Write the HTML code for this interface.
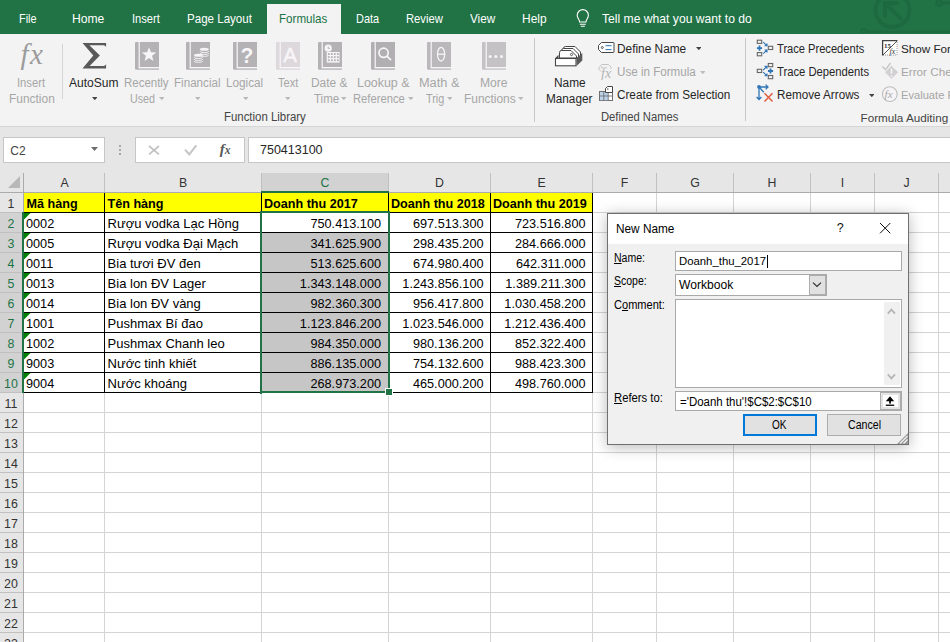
<!DOCTYPE html>
<html><head><meta charset="utf-8"><style>
html,body{margin:0;padding:0;width:950px;height:642px;overflow:hidden;background:#fff}
body{position:relative;font-family:"Liberation Sans", sans-serif}
.t{position:absolute;white-space:nowrap;line-height:1}
.r{position:absolute}
u{text-decoration:underline;text-underline-offset:1px}
</style></head><body>
<div class="r" style="left:0px;top:0px;width:950px;height:34px;background:#217346"></div>
<svg class="r" style="left:820px;top:0" width="130" height="33" viewBox="820 0 130 33">
<g fill="none" stroke="#1e6a40" stroke-width="4">
<circle cx="892.5" cy="10" r="17"/>
<circle cx="939" cy="3" r="2.6" stroke-width="2.6"/>
<path d="M941.5 3 H950" stroke-width="3"/>
<circle cx="863.5" cy="31.5" r="2.4" stroke-width="2.2"/>
<path d="M866 31.8 H950" stroke-width="2.6"/>
</g>
<path d="M883 1 H899 V5 H889.8 L903 18.2 L900.2 21 L887 7.8 V17.5 H883 Z" fill="#1e6a40"/>
</svg>
<div class="t" style="left:18.60px;top:13.47px;font-size:12.2px;color:#ffffff;font-weight:normal;transform:scaleX(0.8904);transform-origin:0 0;">File</div>
<div class="t" style="left:71.60px;top:13.47px;font-size:12.2px;color:#ffffff;font-weight:normal;transform:scaleX(0.9954);transform-origin:0 0;">Home</div>
<div class="t" style="left:131.60px;top:13.47px;font-size:12.2px;color:#ffffff;font-weight:normal;transform:scaleX(0.9111);transform-origin:0 0;">Insert</div>
<div class="t" style="left:187.00px;top:13.47px;font-size:12.2px;color:#ffffff;font-weight:normal;transform:scaleX(0.9487);transform-origin:0 0;">Page Layout</div>
<div class="t" style="left:355.80px;top:13.47px;font-size:12.2px;color:#ffffff;font-weight:normal;transform:scaleX(0.9000);transform-origin:0 0;">Data</div>
<div class="t" style="left:406.30px;top:13.47px;font-size:12.2px;color:#ffffff;font-weight:normal;transform:scaleX(0.9216);transform-origin:0 0;">Review</div>
<div class="t" style="left:469.50px;top:13.47px;font-size:12.2px;color:#ffffff;font-weight:normal;transform:scaleX(0.9636);transform-origin:0 0;">View</div>
<div class="t" style="left:522.40px;top:13.47px;font-size:12.2px;color:#ffffff;font-weight:normal;transform:scaleX(0.9803);transform-origin:0 0;">Help</div>
<div class="t" style="left:602.20px;top:13.47px;font-size:12.2px;color:#ffffff;font-weight:normal;transform:scaleX(0.9957);transform-origin:0 0;">Tell me what you want to do</div>
<div class="r" style="left:267px;top:4px;width:74px;height:30px;background:#f3f3f3"></div>
<div class="t" style="left:279.40px;top:13.47px;font-size:12.2px;color:#217346;font-weight:normal;transform:scaleX(0.9518);transform-origin:0 0;">Formulas</div>
<svg class="r" style="left:572px;top:8px" width="22" height="22" viewBox="572 8 22 22">
<g fill="none" stroke="#ffffff" stroke-width="1.1">
<path d="M579.6 22 C579.6 19.6 577.2 18.2 577.2 15.2 A5.6 5.6 0 0 1 588.4 15.2 C588.4 18.2 586 19.6 586 22 Z"/>
<path d="M579.8 24.2 H585.8 M580.8 26.3 H584.8"/>
</g></svg>
<div class="r" style="left:0px;top:34px;width:950px;height:92px;background:#f3f3f3"></div>
<div class="r" style="left:0px;top:126px;width:950px;height:1px;background:#d6d6d6"></div>
<div class="r" style="left:0px;top:127px;width:950px;height:46px;background:#e6e6e6"></div>
<div class="t" style="left:20.50px;top:39.95px;font-size:29px;color:#9c9c9c;font-weight:normal;font-family:'Liberation Serif', serif;letter-spacing:1.5px"><i>fx</i></div>
<div class="t" style="left:17.40px;top:76.84px;font-size:12px;color:#a6a6a6;font-weight:normal;transform:scaleX(0.9330);transform-origin:0 0;">Insert</div>
<div class="t" style="left:8.60px;top:93.34px;font-size:12px;color:#a6a6a6;font-weight:normal;transform:scaleX(0.9952);transform-origin:0 0;">Function</div>
<div class="r" style="left:62px;top:44px;width:1px;height:55px;background:#d4d4d4"></div>
<svg class="r" style="left:80px;top:40px" width="30" height="32" viewBox="80 40 30 32">
<path d="M82.5 43 H106.1 V47.3 C105.6 45.9 104.6 45.3 102.5 45.3 H89.4 L99.9 55.5 L89.6 66.1 H102.5 C104.6 66.1 105.6 65.5 106.1 64.1 V68.4 H82.5 L93.3 55.5 Z" fill="#595959"/>
</svg>
<div class="t" style="left:69.20px;top:76.84px;font-size:12px;color:#262626;font-weight:normal;transform:scaleX(1.0029);transform-origin:0 0;">AutoSum</div>
<svg class="r" style="left:91.70px;top:97.00px" width="5.6" height="3.2" viewBox="0 0 5.6 3.2"><path d="M0 0 H5.6 L2.8 3.2 Z" fill="#444"/></svg>
<svg class="r" style="left:135.2px;top:42px" width="24" height="28" viewBox="0 0 24 28">
<path d="M1.2 0 H24 V27.8 H1.2 A1.2 1.2 0 0 1 0 26.6 V1.2 A1.2 1.2 0 0 1 1.2 0 Z" fill="#b4b2b5"/>
<rect x="3.6" y="0" width="1.2" height="25.2" fill="#f8f5f8"/>
<path d="M3.6 25 V26.4 H24 V25 Z" fill="#f8f5f8"/>
<path d="M14.00 5.20 L15.88 10.21 L21.23 10.45 L17.04 13.79 L18.47 18.95 L14.00 16.00 L9.53 18.95 L10.96 13.79 L6.77 10.45 L12.12 10.21 Z" fill="#f8f5f8"/>
</svg>
<svg class="r" style="left:186.2px;top:42px" width="24" height="28" viewBox="0 0 24 28">
<path d="M1.2 0 H24 V27.8 H1.2 A1.2 1.2 0 0 1 0 26.6 V1.2 A1.2 1.2 0 0 1 1.2 0 Z" fill="#b4b2b5"/>
<rect x="3.6" y="0" width="1.2" height="25.2" fill="#f8f5f8"/>
<path d="M3.6 25 V26.4 H24 V25 Z" fill="#f8f5f8"/>
<ellipse cx="18.3" cy="7.2" rx="4.4" ry="1.5" fill="#f8f5f8"/><path d="M13.9 9.1 A4.4 1.5 0 0 0 22.700000000000003 9.1" fill="none" stroke="#f8f5f8" stroke-width="0.9"/><path d="M13.9 11.0 A4.4 1.5 0 0 0 22.700000000000003 11.0" fill="none" stroke="#f8f5f8" stroke-width="0.9"/><path d="M13.9 12.899999999999999 A4.4 1.5 0 0 0 22.700000000000003 12.899999999999999" fill="none" stroke="#f8f5f8" stroke-width="0.9"/><ellipse cx="12.4" cy="13.2" rx="4.4" ry="1.5" fill="#f8f5f8"/><path d="M8.0 15.1 A4.4 1.5 0 0 0 16.8 15.1" fill="none" stroke="#f8f5f8" stroke-width="0.9"/><path d="M8.0 17.0 A4.4 1.5 0 0 0 16.8 17.0" fill="none" stroke="#f8f5f8" stroke-width="0.9"/><path d="M8.0 18.9 A4.4 1.5 0 0 0 16.8 18.9" fill="none" stroke="#f8f5f8" stroke-width="0.9"/>
</svg>
<svg class="r" style="left:233px;top:42px" width="24" height="28" viewBox="0 0 24 28">
<path d="M1.2 0 H24 V27.8 H1.2 A1.2 1.2 0 0 1 0 26.6 V1.2 A1.2 1.2 0 0 1 1.2 0 Z" fill="#b4b2b5"/>
<rect x="3.6" y="0" width="1.2" height="25.2" fill="#f8f5f8"/>
<path d="M3.6 25 V26.4 H24 V25 Z" fill="#f8f5f8"/>
<text x="14" y="20.6" font-family="Liberation Sans" font-weight="bold" font-size="21" fill="#f8f5f8" text-anchor="middle" transform="translate(14 20.6) scale(1 1.08) translate(-14 -20.6)">?</text>
</svg>
<svg class="r" style="left:276px;top:42px" width="24" height="28" viewBox="0 0 24 28">
<path d="M1.2 0 H24 V27.8 H1.2 A1.2 1.2 0 0 1 0 26.6 V1.2 A1.2 1.2 0 0 1 1.2 0 Z" fill="#dcd8dc"/>
<rect x="3.6" y="0" width="1.2" height="25.2" fill="#f8f5f8"/>
<path d="M3.6 25 V26.4 H24 V25 Z" fill="#f8f5f8"/>
<text x="14.2" y="20" font-family="Liberation Sans" font-size="20.5" fill="#f8f5f8" stroke="#f8f5f8" stroke-width="0.45" text-anchor="middle">A</text>
</svg>
<svg class="r" style="left:318.3px;top:42px" width="24" height="28" viewBox="0 0 24 28">
<path d="M1.2 0 H24 V27.8 H1.2 A1.2 1.2 0 0 1 0 26.6 V1.2 A1.2 1.2 0 0 1 1.2 0 Z" fill="#b4b2b5"/>
<rect x="3.6" y="0" width="1.2" height="25.2" fill="#f8f5f8"/>
<path d="M3.6 25 V26.4 H24 V25 Z" fill="#f8f5f8"/>
<circle cx="10.2" cy="6.2" r="3.6" fill="#f8f5f8"/><path d="M10.2 4.3 V6.4 H12" stroke="#b4b2b5" stroke-width="0.9" fill="none"/><rect x="8.7" y="10" width="12.8" height="10.6" fill="#f8f5f8"/><rect x="9.9" y="11.1" width="1.8" height="1.9" fill="#b4b2b5"/><rect x="12.9" y="11.1" width="1.8" height="1.9" fill="#b4b2b5"/><rect x="15.9" y="11.1" width="1.8" height="1.9" fill="#b4b2b5"/><rect x="18.9" y="11.1" width="1.8" height="1.9" fill="#b4b2b5"/><rect x="9.9" y="14.2" width="1.8" height="1.9" fill="#b4b2b5"/><rect x="12.9" y="14.2" width="1.8" height="1.9" fill="#b4b2b5"/><rect x="15.9" y="14.2" width="1.8" height="1.9" fill="#b4b2b5"/><rect x="18.9" y="14.2" width="1.8" height="1.9" fill="#b4b2b5"/><rect x="9.9" y="17.3" width="1.8" height="1.9" fill="#b4b2b5"/><rect x="12.9" y="17.3" width="1.8" height="1.9" fill="#b4b2b5"/><rect x="15.9" y="17.3" width="1.8" height="1.9" fill="#b4b2b5"/><rect x="18.9" y="17.3" width="1.8" height="1.9" fill="#b4b2b5"/>
</svg>
<svg class="r" style="left:371px;top:42px" width="24" height="28" viewBox="0 0 24 28">
<path d="M1.2 0 H24 V27.8 H1.2 A1.2 1.2 0 0 1 0 26.6 V1.2 A1.2 1.2 0 0 1 1.2 0 Z" fill="#b1afb2"/>
<rect x="3.6" y="0" width="1.2" height="25.2" fill="#f8f5f8"/>
<path d="M3.6 25 V26.4 H24 V25 Z" fill="#f8f5f8"/>
<g fill="none" stroke="#f8f5f8" stroke-width="1.7"><circle cx="12.6" cy="10.8" r="4.6"/><path d="M15.9 14.1 L20 18.2"/></g>
</svg>
<svg class="r" style="left:427px;top:42px" width="24" height="28" viewBox="0 0 24 28">
<path d="M1.2 0 H24 V27.8 H1.2 A1.2 1.2 0 0 1 0 26.6 V1.2 A1.2 1.2 0 0 1 1.2 0 Z" fill="#bab8bb"/>
<rect x="3.6" y="0" width="1.2" height="25.2" fill="#f8f5f8"/>
<path d="M3.6 25 V26.4 H24 V25 Z" fill="#f8f5f8"/>
<g fill="none" stroke="#f8f5f8" stroke-width="1.3"><ellipse cx="14.1" cy="12.2" rx="3.6" ry="6.8"/><path d="M10.5 12.2 H17.7"/></g>
</svg>
<svg class="r" style="left:482.2px;top:42px" width="24" height="28" viewBox="0 0 24 28">
<path d="M1.2 0 H24 V27.8 H1.2 A1.2 1.2 0 0 1 0 26.6 V1.2 A1.2 1.2 0 0 1 1.2 0 Z" fill="#c4c2c5"/>
<rect x="3.6" y="0" width="1.2" height="25.2" fill="#f8f5f8"/>
<path d="M3.6 25 V26.4 H24 V25 Z" fill="#f8f5f8"/>
<g fill="#f8f5f8"><circle cx="8.1" cy="14.6" r="1.5"/><circle cx="13.9" cy="14.6" r="1.5"/><circle cx="19.5" cy="14.6" r="1.5"/></g>
</svg>
<div class="t" style="left:124.20px;top:76.84px;font-size:12px;color:#a6a6a6;font-weight:normal;transform:scaleX(0.9552);transform-origin:0 0;">Recently</div>
<div class="t" style="left:130.40px;top:93.34px;font-size:12px;color:#a6a6a6;font-weight:normal;transform:scaleX(0.8926);transform-origin:0 0;">Used</div>
<svg class="r" style="left:158.90px;top:97.00px" width="5.6" height="3.2" viewBox="0 0 5.6 3.2"><path d="M0 0 H5.6 L2.8 3.2 Z" fill="#b9b9b9"/></svg>
<div class="t" style="left:174.20px;top:76.84px;font-size:12px;color:#a6a6a6;font-weight:normal;transform:scaleX(0.9683);transform-origin:0 0;">Financial</div>
<svg class="r" style="left:194.60px;top:97.00px" width="5.6" height="3.2" viewBox="0 0 5.6 3.2"><path d="M0 0 H5.6 L2.8 3.2 Z" fill="#b9b9b9"/></svg>
<div class="t" style="left:226.40px;top:76.84px;font-size:12px;color:#a6a6a6;font-weight:normal;transform:scaleX(0.9782);transform-origin:0 0;">Logical</div>
<svg class="r" style="left:242.60px;top:97.00px" width="5.6" height="3.2" viewBox="0 0 5.6 3.2"><path d="M0 0 H5.6 L2.8 3.2 Z" fill="#b9b9b9"/></svg>
<div class="t" style="left:277.60px;top:76.84px;font-size:12px;color:#a6a6a6;font-weight:normal;transform:scaleX(0.9178);transform-origin:0 0;">Text</div>
<svg class="r" style="left:284.60px;top:97.00px" width="5.6" height="3.2" viewBox="0 0 5.6 3.2"><path d="M0 0 H5.6 L2.8 3.2 Z" fill="#b9b9b9"/></svg>
<div class="t" style="left:311.30px;top:76.84px;font-size:12px;color:#a6a6a6;font-weight:normal;transform:scaleX(0.9950);transform-origin:0 0;">Date &amp;</div>
<div class="t" style="left:313.80px;top:93.34px;font-size:12px;color:#a6a6a6;font-weight:normal;transform:scaleX(0.9611);transform-origin:0 0;">Time</div>
<svg class="r" style="left:341.20px;top:97.00px" width="5.6" height="3.2" viewBox="0 0 5.6 3.2"><path d="M0 0 H5.6 L2.8 3.2 Z" fill="#b9b9b9"/></svg>
<div class="t" style="left:357.30px;top:76.84px;font-size:12px;color:#a6a6a6;font-weight:normal;transform:scaleX(1.0353);transform-origin:0 0;">Lookup &amp;</div>
<div class="t" style="left:353.40px;top:93.34px;font-size:12px;color:#a6a6a6;font-weight:normal;transform:scaleX(0.9356);transform-origin:0 0;">Reference</div>
<svg class="r" style="left:407.70px;top:97.00px" width="5.6" height="3.2" viewBox="0 0 5.6 3.2"><path d="M0 0 H5.6 L2.8 3.2 Z" fill="#b9b9b9"/></svg>
<div class="t" style="left:418.50px;top:76.84px;font-size:12px;color:#a6a6a6;font-weight:normal;transform:scaleX(1.0627);transform-origin:0 0;">Math &amp;</div>
<div class="t" style="left:425.50px;top:93.34px;font-size:12px;color:#a6a6a6;font-weight:normal;transform:scaleX(0.9001);transform-origin:0 0;">Trig</div>
<svg class="r" style="left:446.80px;top:97.00px" width="5.6" height="3.2" viewBox="0 0 5.6 3.2"><path d="M0 0 H5.6 L2.8 3.2 Z" fill="#b9b9b9"/></svg>
<div class="t" style="left:480.40px;top:76.84px;font-size:12px;color:#a6a6a6;font-weight:normal;transform:scaleX(1.0097);transform-origin:0 0;">More</div>
<div class="t" style="left:464.30px;top:93.34px;font-size:12px;color:#a6a6a6;font-weight:normal;transform:scaleX(0.9938);transform-origin:0 0;">Functions</div>
<svg class="r" style="left:518.40px;top:97.00px" width="5.6" height="3.2" viewBox="0 0 5.6 3.2"><path d="M0 0 H5.6 L2.8 3.2 Z" fill="#b9b9b9"/></svg>
<div class="t" style="left:224.40px;top:111.24px;font-size:12px;color:#444444;font-weight:normal;transform:scaleX(0.9507);transform-origin:0 0;">Function Library</div>
<div class="r" style="left:534px;top:38px;width:1px;height:84px;background:#c8c8c8"></div>
<svg class="r" style="left:550px;top:42px" width="36" height="28" viewBox="550 42 36 28">
<g fill="#fff" stroke="#474747" stroke-width="1">
<path d="M563.5 58 V48.5 Q563.5 46.5 565.5 46.5 H575 L580.5 52 V58 Z"/>
<path d="M561.5 58 V50.5 Q561.5 48.5 563.5 48.5 H573 L578.5 54 V58 Z"/>
<path d="M559.5 58 V52.5 Q559.5 50.5 561.5 50.5 H571 L576.5 56 V58 Z"/>
</g>
<circle cx="571.5" cy="54.5" r="1.1" fill="none" stroke="#474747" stroke-width="0.9"/>
<rect x="555.5" y="58.5" width="20.5" height="7.3" fill="#fff" stroke="#474747" stroke-width="1.1"/>
<path d="M576.5 58 L582.3 53 V60.6 L576.5 66 Z" fill="#5a5a5a"/>
<path d="M555.2 58.2 L558.5 54.8 V58.2 Z" fill="#474747"/>
</svg>
<div class="t" style="left:553.80px;top:76.84px;font-size:12px;color:#262626;font-weight:normal;transform:scaleX(0.9870);transform-origin:0 0;">Name</div>
<div class="t" style="left:545.60px;top:93.34px;font-size:12px;color:#262626;font-weight:normal;transform:scaleX(0.9796);transform-origin:0 0;">Manager</div>
<svg class="r" style="left:596px;top:40px" width="20" height="15" viewBox="596 40 20 15">
<path d="M601.5 42.5 H613.5 Q614 42.5 614 43 V52 Q614 52.5 613.5 52.5 H601.5 L598.5 49.5 V45.5 Z" fill="#fff" stroke="#474747" stroke-width="1"/>
<circle cx="602.3" cy="47.5" r="1" fill="none" stroke="#474747" stroke-width="0.9"/>
<path d="M605.5 45.7 H611.5 M605.5 49.6 H611.5" stroke="#2e75b6" stroke-width="1"/>
</svg>
<div class="t" style="left:617.20px;top:42.84px;font-size:12px;color:#262626;font-weight:normal;transform:scaleX(0.9881);transform-origin:0 0;">Define Name</div>
<svg class="r" style="left:695.70px;top:47.00px" width="5.6" height="3.2" viewBox="0 0 5.6 3.2"><path d="M0 0 H5.6 L2.8 3.2 Z" fill="#444"/></svg>
<svg class="r" style="left:596px;top:62px" width="20" height="18" viewBox="596 62 20 18">
<path d="M601.5 64.5 H608.5 L611 67 V69 M599 67.5 V69.5 L601 71.5 M599 67.5 L601.5 64.5" fill="none" stroke="#c4c4c4" stroke-width="1"/>
<circle cx="602" cy="67.5" r="0.9" fill="#c4c4c4"/>
<text x="601" y="77.5" font-family="Liberation Serif" font-style="italic" font-size="14" fill="#b4b4b4">fx</text>
</svg>
<div class="t" style="left:617.20px;top:65.84px;font-size:12px;color:#a6a6a6;font-weight:normal;transform:scaleX(0.9684);transform-origin:0 0;">Use in Formula</div>
<svg class="r" style="left:699.70px;top:70.50px" width="5.6" height="3.2" viewBox="0 0 5.6 3.2"><path d="M0 0 H5.6 L2.8 3.2 Z" fill="#bdbdbd"/></svg>
<svg class="r" style="left:597px;top:85px" width="18" height="17" viewBox="597 85 18 17">
<rect x="599.5" y="91.5" width="13" height="9" fill="#fff" stroke="#6f6f6f" stroke-width="1"/>
<rect x="600" y="92" width="8.2" height="8.2" fill="#bcd3ec"/>
<path d="M599.5 96 H612.5 M603.8 91.5 V100.5 M608.2 91.5 V100.5" stroke="#6f6f6f" stroke-width="0.9"/>
<path d="M605.5 88.5 L607.5 86.5 H612.5 V92.5 H605.5 Z" fill="#fff" stroke="#474747" stroke-width="1"/>
<circle cx="607.8" cy="89" r="0.7" fill="#474747"/>
</svg>
<div class="t" style="left:617.20px;top:88.84px;font-size:12px;color:#262626;font-weight:normal;transform:scaleX(0.9771);transform-origin:0 0;">Create from Selection</div>
<div class="t" style="left:601.30px;top:111.24px;font-size:12px;color:#444444;font-weight:normal;transform:scaleX(0.9359);transform-origin:0 0;">Defined Names</div>
<div class="r" style="left:745px;top:38px;width:1px;height:83px;background:#c8c8c8"></div>
<svg class="r" style="left:752px;top:36px" width="24" height="70" viewBox="752 36 24 70">
<g fill="none" stroke="#666" stroke-width="1.1">
<rect x="757.3" y="40.2" width="4.4" height="3.2"/><rect x="757.3" y="52.6" width="4.4" height="3.2"/><rect x="768.3" y="46.3" width="4.4" height="3.2"/>
<rect x="757.3" y="69.3" width="4.4" height="3.2"/><rect x="768.3" y="63.5" width="4.4" height="3.2"/><rect x="768.3" y="75.5" width="4.4" height="3.2"/>
</g>
<g stroke="#2e75b6" stroke-width="1.8" fill="none">
<path d="M759.5 45.6 V50.8 M756.9 48.2 H762.1"/>
<path d="M770.5 68.4 V73.6 M767.9 71 H773.1"/>
</g>
<g stroke="#2e75b6" stroke-width="1.1" fill="none">
<path d="M763.2 42.2 L766.8 45.6 M764.6 45.8 H767 V43.4"/>
<path d="M763.2 53.6 L766.8 50.2 M764.6 50 H767 V52.4"/>
<path d="M763.2 70 L766.8 66.6 M764.6 66.4 H767 V68.8"/>
<path d="M763.2 72.2 L766.8 75.6 M764.6 75.8 H767 V73.4"/>
</g>
<g stroke="#2e75b6" stroke-width="1.3" fill="none">
<path d="M759 87 V99.5 M756.6 97 L759 99.5 L761.4 97"/>
<path d="M759 87 H768 M765.6 84.6 L768 87 L765.6 89.4"/>
<path d="M759 87 L763.8 92.2"/>
</g>
<circle cx="759" cy="86.8" r="1.9" fill="#2e75b6"/>
<path d="M764.5 93.2 L772.5 101.5 M772.5 93.2 L764.5 101.5" stroke="#e05a3a" stroke-width="1.4"/>
</svg>
<div class="t" style="left:776.50px;top:42.84px;font-size:12px;color:#262626;font-weight:normal;transform:scaleX(0.9260);transform-origin:0 0;">Trace Precedents</div>
<div class="t" style="left:776.50px;top:66.14px;font-size:12px;color:#262626;font-weight:normal;transform:scaleX(0.9371);transform-origin:0 0;">Trace Dependents</div>
<div class="t" style="left:776.50px;top:88.84px;font-size:12px;color:#262626;font-weight:normal;transform:scaleX(0.9729);transform-origin:0 0;">Remove Arrows</div>
<svg class="r" style="left:868.70px;top:93.50px" width="5.6" height="3.2" viewBox="0 0 5.6 3.2"><path d="M0 0 H5.6 L2.8 3.2 Z" fill="#444"/></svg>
<svg class="r" style="left:880px;top:38px" width="20" height="20" viewBox="880 38 20 20">
<rect x="882.5" y="40.5" width="14.5" height="14.5" fill="#fff" stroke="#9a9a9a" stroke-width="1" stroke-dasharray="1 1"/>
<path d="M882.6 55.4 V40.6 H897.4" fill="none" stroke="#444" stroke-width="1.3"/>
<path d="M883 55 L897 41" stroke="#444" stroke-width="0.9"/>
<text x="884" y="47.5" font-family="Liberation Serif" font-size="7" font-weight="bold" fill="#333">15</text>
<text x="889.5" y="54" font-family="Liberation Serif" font-style="italic" font-size="8" fill="#333">fx</text>
</svg>
<div class="t" style="left:901.00px;top:43.10px;font-size:11.7px;color:#262626;font-weight:normal;font-family:'Liberation Sans', sans-serif;">Show Formulas</div>
<svg class="r" style="left:880px;top:61px" width="20" height="20" viewBox="880 61 20 20">
<path d="M882.3 66.5 L885.5 69.6 L890.5 63" fill="none" stroke="#c8c8c8" stroke-width="1.5"/>
<path d="M891.5 65.8 L898 72.3 L891.5 78.8 L885 72.3 Z" fill="#d2d0d2"/>
<path d="M891.5 68.5 V73.8 M891.5 75.2 V76.8" stroke="#f3f3f3" stroke-width="1.6"/>
</svg>
<div class="t" style="left:901.00px;top:66.40px;font-size:11.7px;color:#a6a6a6;font-weight:normal;font-family:'Liberation Sans', sans-serif;">Error Checking</div>
<svg class="r" style="left:880px;top:84px" width="20" height="20" viewBox="880 84 20 20">
<circle cx="889.8" cy="94.1" r="7.4" fill="#f6f4f6" stroke="#bdbdbd" stroke-width="1.1"/>
<text x="884.6" y="98.2" font-family="Liberation Serif" font-style="italic" font-size="11" fill="#a8a8a8">fx</text>
</svg>
<div class="t" style="left:901.00px;top:89.56px;font-size:11.15px;color:#a6a6a6;font-weight:normal;font-family:'Liberation Sans', sans-serif;">Evaluate Formula</div>
<div class="t" style="left:860.50px;top:111.70px;font-size:11.7px;color:#444444;font-weight:normal;font-family:'Liberation Sans', sans-serif;">Formula Auditing</div>
<div class="r" style="left:3px;top:137px;width:102px;height:26px;background:#fff;border:1px solid #c6c6c6;box-sizing:border-box"></div>
<div class="t" style="left:10.30px;top:144.84px;font-size:12px;color:#444444;font-weight:normal;font-family:'Liberation Sans', sans-serif;">C2</div>
<svg class="r" style="left:91.00px;top:147.00px" width="7" height="4" viewBox="0 0 7 4"><path d="M0 0 H7 L3.5 4 Z" fill="#6d6d6d"/></svg>
<div class="r" style="left:119px;top:145px;width:2px;height:2px;background:#a8a8a8"></div>
<div class="r" style="left:119px;top:149px;width:2px;height:2px;background:#a8a8a8"></div>
<div class="r" style="left:119px;top:153px;width:2px;height:2px;background:#a8a8a8"></div>
<div class="r" style="left:135px;top:137px;width:110px;height:26px;background:#fff;border:1px solid #c6c6c6;box-sizing:border-box"></div>
<svg class="r" style="left:145px;top:142px" width="18" height="16" viewBox="145 142 18 16"><path d="M149 146 L159 154.3 M159 146 L149 154.3" stroke="#c2c2c2" stroke-width="1.7"/></svg>
<svg class="r" style="left:182px;top:142px" width="18" height="16" viewBox="182 142 18 16"><path d="M185 149.6 L189.3 154.3 L196.3 145.4" fill="none" stroke="#c6c6c6" stroke-width="2.1"/></svg>
<div class="t" style="left:219.80px;top:141.70px;font-size:15px;color:#595959;font-weight:bold;font-family:'Liberation Serif', serif;"><i>f</i><i style="font-size:11.5px">x</i></div>
<div class="r" style="left:248px;top:137px;width:702px;height:26px;background:#fff;border:1px solid #c6c6c6;border-right:none;box-sizing:border-box"></div>
<div class="t" style="left:260.00px;top:144.42px;font-size:12.5px;color:#262626;font-weight:normal;font-family:'Liberation Sans', sans-serif;">750413100</div>
<div class="r" style="left:0px;top:173px;width:950px;height:469px;background:#fff"></div>
<div class="r" style="left:0px;top:173px;width:950px;height:19px;background:#e6e6e6"></div>
<div class="r" style="left:261px;top:173px;width:127px;height:19px;background:#d2d2d2"></div>
<div class="r" style="left:0px;top:192px;width:23px;height:450px;background:#e6e6e6"></div>
<div class="r" style="left:0px;top:212px;width:23px;height:180px;background:#d2d2d2"></div>
<div class="r" style="left:24px;top:212px;width:926px;height:1px;background:#d4d4d4"></div><div class="r" style="left:0;top:212px;width:23px;height:1px;background:#c0c0c0"></div><div class="r" style="left:24px;top:232px;width:926px;height:1px;background:#d4d4d4"></div><div class="r" style="left:0;top:232px;width:23px;height:1px;background:#c0c0c0"></div><div class="r" style="left:24px;top:252px;width:926px;height:1px;background:#d4d4d4"></div><div class="r" style="left:0;top:252px;width:23px;height:1px;background:#c0c0c0"></div><div class="r" style="left:24px;top:272px;width:926px;height:1px;background:#d4d4d4"></div><div class="r" style="left:0;top:272px;width:23px;height:1px;background:#c0c0c0"></div><div class="r" style="left:24px;top:292px;width:926px;height:1px;background:#d4d4d4"></div><div class="r" style="left:0;top:292px;width:23px;height:1px;background:#c0c0c0"></div><div class="r" style="left:24px;top:312px;width:926px;height:1px;background:#d4d4d4"></div><div class="r" style="left:0;top:312px;width:23px;height:1px;background:#c0c0c0"></div><div class="r" style="left:24px;top:332px;width:926px;height:1px;background:#d4d4d4"></div><div class="r" style="left:0;top:332px;width:23px;height:1px;background:#c0c0c0"></div><div class="r" style="left:24px;top:352px;width:926px;height:1px;background:#d4d4d4"></div><div class="r" style="left:0;top:352px;width:23px;height:1px;background:#c0c0c0"></div><div class="r" style="left:24px;top:372px;width:926px;height:1px;background:#d4d4d4"></div><div class="r" style="left:0;top:372px;width:23px;height:1px;background:#c0c0c0"></div><div class="r" style="left:24px;top:392px;width:926px;height:1px;background:#d4d4d4"></div><div class="r" style="left:0;top:392px;width:23px;height:1px;background:#c0c0c0"></div><div class="r" style="left:24px;top:412px;width:926px;height:1px;background:#d4d4d4"></div><div class="r" style="left:0;top:412px;width:23px;height:1px;background:#c0c0c0"></div><div class="r" style="left:24px;top:432px;width:926px;height:1px;background:#d4d4d4"></div><div class="r" style="left:0;top:432px;width:23px;height:1px;background:#c0c0c0"></div><div class="r" style="left:24px;top:452px;width:926px;height:1px;background:#d4d4d4"></div><div class="r" style="left:0;top:452px;width:23px;height:1px;background:#c0c0c0"></div><div class="r" style="left:24px;top:472px;width:926px;height:1px;background:#d4d4d4"></div><div class="r" style="left:0;top:472px;width:23px;height:1px;background:#c0c0c0"></div><div class="r" style="left:24px;top:492px;width:926px;height:1px;background:#d4d4d4"></div><div class="r" style="left:0;top:492px;width:23px;height:1px;background:#c0c0c0"></div><div class="r" style="left:24px;top:512px;width:926px;height:1px;background:#d4d4d4"></div><div class="r" style="left:0;top:512px;width:23px;height:1px;background:#c0c0c0"></div><div class="r" style="left:24px;top:532px;width:926px;height:1px;background:#d4d4d4"></div><div class="r" style="left:0;top:532px;width:23px;height:1px;background:#c0c0c0"></div><div class="r" style="left:24px;top:552px;width:926px;height:1px;background:#d4d4d4"></div><div class="r" style="left:0;top:552px;width:23px;height:1px;background:#c0c0c0"></div><div class="r" style="left:24px;top:572px;width:926px;height:1px;background:#d4d4d4"></div><div class="r" style="left:0;top:572px;width:23px;height:1px;background:#c0c0c0"></div><div class="r" style="left:24px;top:592px;width:926px;height:1px;background:#d4d4d4"></div><div class="r" style="left:0;top:592px;width:23px;height:1px;background:#c0c0c0"></div><div class="r" style="left:24px;top:612px;width:926px;height:1px;background:#d4d4d4"></div><div class="r" style="left:0;top:612px;width:23px;height:1px;background:#c0c0c0"></div><div class="r" style="left:24px;top:632px;width:926px;height:1px;background:#d4d4d4"></div><div class="r" style="left:0;top:632px;width:23px;height:1px;background:#c0c0c0"></div><div class="r" style="left:24px;top:652px;width:926px;height:1px;background:#d4d4d4"></div><div class="r" style="left:0;top:652px;width:23px;height:1px;background:#c0c0c0"></div><div class="r" style="left:104px;top:192px;width:1px;height:450px;background:#d4d4d4"></div><div class="r" style="left:104px;top:173px;width:1px;height:19px;background:#c0c0c0"></div><div class="r" style="left:261px;top:192px;width:1px;height:450px;background:#d4d4d4"></div><div class="r" style="left:261px;top:173px;width:1px;height:19px;background:#c0c0c0"></div><div class="r" style="left:388px;top:192px;width:1px;height:450px;background:#d4d4d4"></div><div class="r" style="left:388px;top:173px;width:1px;height:19px;background:#c0c0c0"></div><div class="r" style="left:490px;top:192px;width:1px;height:450px;background:#d4d4d4"></div><div class="r" style="left:490px;top:173px;width:1px;height:19px;background:#c0c0c0"></div><div class="r" style="left:592px;top:192px;width:1px;height:450px;background:#d4d4d4"></div><div class="r" style="left:592px;top:173px;width:1px;height:19px;background:#c0c0c0"></div><div class="r" style="left:656px;top:192px;width:1px;height:450px;background:#d4d4d4"></div><div class="r" style="left:656px;top:173px;width:1px;height:19px;background:#c0c0c0"></div><div class="r" style="left:733px;top:192px;width:1px;height:450px;background:#d4d4d4"></div><div class="r" style="left:733px;top:173px;width:1px;height:19px;background:#c0c0c0"></div><div class="r" style="left:810px;top:192px;width:1px;height:450px;background:#d4d4d4"></div><div class="r" style="left:810px;top:173px;width:1px;height:19px;background:#c0c0c0"></div><div class="r" style="left:874px;top:192px;width:1px;height:450px;background:#d4d4d4"></div><div class="r" style="left:874px;top:173px;width:1px;height:19px;background:#c0c0c0"></div><div class="r" style="left:938px;top:192px;width:1px;height:450px;background:#d4d4d4"></div><div class="r" style="left:938px;top:173px;width:1px;height:19px;background:#c0c0c0"></div><div class="r" style="left:1015px;top:192px;width:1px;height:450px;background:#d4d4d4"></div><div class="r" style="left:1015px;top:173px;width:1px;height:19px;background:#c0c0c0"></div>
<div class="r" style="left:0px;top:192px;width:950px;height:1px;background:#ababab"></div>
<div class="r" style="left:23px;top:173px;width:1px;height:469px;background:#ababab"></div>
<svg class="r" style="left:8px;top:176px" width="12" height="12" viewBox="0 0 12 12"><path d="M12 0 V12 H0 Z" fill="#b8b8b8"/></svg>
<div class="t" style="left:64.50px;transform:translateX(-50%);top:176.89px;font-size:12.3px;color:#333333;font-weight:normal;font-family:'Liberation Sans', sans-serif;">A</div>
<div class="t" style="left:183.00px;transform:translateX(-50%);top:176.89px;font-size:12.3px;color:#333333;font-weight:normal;font-family:'Liberation Sans', sans-serif;">B</div>
<div class="t" style="left:325.00px;transform:translateX(-50%);top:176.89px;font-size:12.3px;color:#217346;font-weight:normal;font-family:'Liberation Sans', sans-serif;">C</div>
<div class="t" style="left:439.50px;transform:translateX(-50%);top:176.89px;font-size:12.3px;color:#333333;font-weight:normal;font-family:'Liberation Sans', sans-serif;">D</div>
<div class="t" style="left:541.50px;transform:translateX(-50%);top:176.89px;font-size:12.3px;color:#333333;font-weight:normal;font-family:'Liberation Sans', sans-serif;">E</div>
<div class="t" style="left:624.50px;transform:translateX(-50%);top:176.89px;font-size:12.3px;color:#333333;font-weight:normal;font-family:'Liberation Sans', sans-serif;">F</div>
<div class="t" style="left:695.00px;transform:translateX(-50%);top:176.89px;font-size:12.3px;color:#333333;font-weight:normal;font-family:'Liberation Sans', sans-serif;">G</div>
<div class="t" style="left:772.00px;transform:translateX(-50%);top:176.89px;font-size:12.3px;color:#333333;font-weight:normal;font-family:'Liberation Sans', sans-serif;">H</div>
<div class="t" style="left:842.50px;transform:translateX(-50%);top:176.89px;font-size:12.3px;color:#333333;font-weight:normal;font-family:'Liberation Sans', sans-serif;">I</div>
<div class="t" style="left:906.50px;transform:translateX(-50%);top:176.89px;font-size:12.3px;color:#333333;font-weight:normal;font-family:'Liberation Sans', sans-serif;">J</div>
<div class="t" style="left:977.00px;transform:translateX(-50%);top:176.89px;font-size:12.3px;color:#333333;font-weight:normal;font-family:'Liberation Sans', sans-serif;">K</div>
<div class="t" style="left:11.00px;transform:translateX(-50%);top:197.60px;font-size:12.4px;color:#333333;font-weight:normal;font-family:'Liberation Sans', sans-serif;">1</div>
<div class="t" style="left:11.00px;transform:translateX(-50%);top:217.60px;font-size:12.4px;color:#217346;font-weight:normal;font-family:'Liberation Sans', sans-serif;">2</div>
<div class="t" style="left:11.00px;transform:translateX(-50%);top:237.60px;font-size:12.4px;color:#217346;font-weight:normal;font-family:'Liberation Sans', sans-serif;">3</div>
<div class="t" style="left:11.00px;transform:translateX(-50%);top:257.60px;font-size:12.4px;color:#217346;font-weight:normal;font-family:'Liberation Sans', sans-serif;">4</div>
<div class="t" style="left:11.00px;transform:translateX(-50%);top:277.60px;font-size:12.4px;color:#217346;font-weight:normal;font-family:'Liberation Sans', sans-serif;">5</div>
<div class="t" style="left:11.00px;transform:translateX(-50%);top:297.60px;font-size:12.4px;color:#217346;font-weight:normal;font-family:'Liberation Sans', sans-serif;">6</div>
<div class="t" style="left:11.00px;transform:translateX(-50%);top:317.60px;font-size:12.4px;color:#217346;font-weight:normal;font-family:'Liberation Sans', sans-serif;">7</div>
<div class="t" style="left:11.00px;transform:translateX(-50%);top:337.60px;font-size:12.4px;color:#217346;font-weight:normal;font-family:'Liberation Sans', sans-serif;">8</div>
<div class="t" style="left:11.00px;transform:translateX(-50%);top:357.60px;font-size:12.4px;color:#217346;font-weight:normal;font-family:'Liberation Sans', sans-serif;">9</div>
<div class="t" style="left:11.00px;transform:translateX(-50%);top:377.60px;font-size:12.4px;color:#217346;font-weight:normal;font-family:'Liberation Sans', sans-serif;">10</div>
<div class="t" style="left:11.00px;transform:translateX(-50%);top:397.60px;font-size:12.4px;color:#333333;font-weight:normal;font-family:'Liberation Sans', sans-serif;">11</div>
<div class="t" style="left:11.00px;transform:translateX(-50%);top:417.60px;font-size:12.4px;color:#333333;font-weight:normal;font-family:'Liberation Sans', sans-serif;">12</div>
<div class="t" style="left:11.00px;transform:translateX(-50%);top:437.60px;font-size:12.4px;color:#333333;font-weight:normal;font-family:'Liberation Sans', sans-serif;">13</div>
<div class="t" style="left:11.00px;transform:translateX(-50%);top:457.60px;font-size:12.4px;color:#333333;font-weight:normal;font-family:'Liberation Sans', sans-serif;">14</div>
<div class="t" style="left:11.00px;transform:translateX(-50%);top:477.60px;font-size:12.4px;color:#333333;font-weight:normal;font-family:'Liberation Sans', sans-serif;">15</div>
<div class="t" style="left:11.00px;transform:translateX(-50%);top:497.60px;font-size:12.4px;color:#333333;font-weight:normal;font-family:'Liberation Sans', sans-serif;">16</div>
<div class="t" style="left:11.00px;transform:translateX(-50%);top:517.60px;font-size:12.4px;color:#333333;font-weight:normal;font-family:'Liberation Sans', sans-serif;">17</div>
<div class="t" style="left:11.00px;transform:translateX(-50%);top:537.60px;font-size:12.4px;color:#333333;font-weight:normal;font-family:'Liberation Sans', sans-serif;">18</div>
<div class="t" style="left:11.00px;transform:translateX(-50%);top:557.60px;font-size:12.4px;color:#333333;font-weight:normal;font-family:'Liberation Sans', sans-serif;">19</div>
<div class="t" style="left:11.00px;transform:translateX(-50%);top:577.60px;font-size:12.4px;color:#333333;font-weight:normal;font-family:'Liberation Sans', sans-serif;">20</div>
<div class="t" style="left:11.00px;transform:translateX(-50%);top:597.60px;font-size:12.4px;color:#333333;font-weight:normal;font-family:'Liberation Sans', sans-serif;">21</div>
<div class="t" style="left:11.00px;transform:translateX(-50%);top:617.60px;font-size:12.4px;color:#333333;font-weight:normal;font-family:'Liberation Sans', sans-serif;">22</div>
<div class="t" style="left:11.00px;transform:translateX(-50%);top:637.60px;font-size:12.4px;color:#333333;font-weight:normal;font-family:'Liberation Sans', sans-serif;">23</div>
<div class="r" style="left:24px;top:193px;width:568px;height:19px;background:#ffff00"></div>
<div class="r" style="left:262px;top:213px;width:126px;height:179px;background:#c6c6c6"></div>
<div class="r" style="left:262px;top:213px;width:126px;height:19px;background:#ffffff"></div>
<div class="r" style="left:24px;top:212px;width:569px;height:1px;background:#000"></div><div class="r" style="left:24px;top:232px;width:569px;height:1px;background:#000"></div><div class="r" style="left:24px;top:252px;width:569px;height:1px;background:#000"></div><div class="r" style="left:24px;top:272px;width:569px;height:1px;background:#000"></div><div class="r" style="left:24px;top:292px;width:569px;height:1px;background:#000"></div><div class="r" style="left:24px;top:312px;width:569px;height:1px;background:#000"></div><div class="r" style="left:24px;top:332px;width:569px;height:1px;background:#000"></div><div class="r" style="left:24px;top:352px;width:569px;height:1px;background:#000"></div><div class="r" style="left:24px;top:372px;width:569px;height:1px;background:#000"></div><div class="r" style="left:24px;top:392px;width:569px;height:1px;background:#000"></div><div class="r" style="left:104px;top:193px;width:1px;height:200px;background:#000"></div><div class="r" style="left:261px;top:193px;width:1px;height:200px;background:#000"></div><div class="r" style="left:388px;top:193px;width:1px;height:200px;background:#000"></div><div class="r" style="left:490px;top:193px;width:1px;height:200px;background:#000"></div><div class="r" style="left:592px;top:193px;width:1px;height:200px;background:#000"></div>
<div class="t" style="left:26.60px;top:197.63px;font-size:12.6px;color:#000;font-weight:bold;font-family:'Liberation Sans', sans-serif;">Mã hàng</div>
<div class="t" style="left:107.50px;top:197.63px;font-size:12.6px;color:#000;font-weight:bold;font-family:'Liberation Sans', sans-serif;">Tên hàng</div>
<div class="t" style="left:264.00px;top:197.63px;font-size:12.6px;color:#000;font-weight:bold;font-family:'Liberation Sans', sans-serif;">Doanh thu 2017</div>
<div class="t" style="left:391.00px;top:197.63px;font-size:12.6px;color:#000;font-weight:bold;font-family:'Liberation Sans', sans-serif;">Doanh thu 2018</div>
<div class="t" style="left:493.00px;top:197.63px;font-size:12.6px;color:#000;font-weight:bold;font-family:'Liberation Sans', sans-serif;">Doanh thu 2019</div>
<div class="t" style="left:26.00px;top:217.65px;font-size:12.7px;color:#000;font-weight:normal;font-family:'Liberation Sans', sans-serif;">0002</div>
<div class="t" style="left:107.60px;top:217.40px;font-size:13px;color:#000;font-weight:normal;font-family:'Liberation Sans', sans-serif;">Rượu vodka Lạc Hồng</div>
<div class="t" style="right:569.00px;top:217.65px;font-size:12.7px;color:#000;font-weight:normal;font-family:'Liberation Sans', sans-serif;">750.413.100</div>
<div class="t" style="right:466.50px;top:217.65px;font-size:12.7px;color:#000;font-weight:normal;font-family:'Liberation Sans', sans-serif;">697.513.300</div>
<div class="t" style="right:364.50px;top:217.65px;font-size:12.7px;color:#000;font-weight:normal;font-family:'Liberation Sans', sans-serif;">723.516.800</div>
<svg class="r" style="left:24px;top:213px" width="7" height="7" viewBox="0 0 7 7"><path d="M0 0 H6.5 L0 6.5 Z" fill="#008000"/></svg>
<div class="t" style="left:26.00px;top:237.65px;font-size:12.7px;color:#000;font-weight:normal;font-family:'Liberation Sans', sans-serif;">0005</div>
<div class="t" style="left:107.60px;top:237.40px;font-size:13px;color:#000;font-weight:normal;font-family:'Liberation Sans', sans-serif;">Rượu vodka Đại Mạch</div>
<div class="t" style="right:569.00px;top:237.65px;font-size:12.7px;color:#000;font-weight:normal;font-family:'Liberation Sans', sans-serif;">341.625.900</div>
<div class="t" style="right:466.50px;top:237.65px;font-size:12.7px;color:#000;font-weight:normal;font-family:'Liberation Sans', sans-serif;">298.435.200</div>
<div class="t" style="right:364.50px;top:237.65px;font-size:12.7px;color:#000;font-weight:normal;font-family:'Liberation Sans', sans-serif;">284.666.000</div>
<svg class="r" style="left:24px;top:233px" width="7" height="7" viewBox="0 0 7 7"><path d="M0 0 H6.5 L0 6.5 Z" fill="#008000"/></svg>
<div class="t" style="left:26.00px;top:257.65px;font-size:12.7px;color:#000;font-weight:normal;font-family:'Liberation Sans', sans-serif;">0011</div>
<div class="t" style="left:107.60px;top:257.40px;font-size:13px;color:#000;font-weight:normal;font-family:'Liberation Sans', sans-serif;">Bia tươi ĐV đen</div>
<div class="t" style="right:569.00px;top:257.65px;font-size:12.7px;color:#000;font-weight:normal;font-family:'Liberation Sans', sans-serif;">513.625.600</div>
<div class="t" style="right:466.50px;top:257.65px;font-size:12.7px;color:#000;font-weight:normal;font-family:'Liberation Sans', sans-serif;">674.980.400</div>
<div class="t" style="right:364.50px;top:257.65px;font-size:12.7px;color:#000;font-weight:normal;font-family:'Liberation Sans', sans-serif;">642.311.000</div>
<svg class="r" style="left:24px;top:253px" width="7" height="7" viewBox="0 0 7 7"><path d="M0 0 H6.5 L0 6.5 Z" fill="#008000"/></svg>
<div class="t" style="left:26.00px;top:277.65px;font-size:12.7px;color:#000;font-weight:normal;font-family:'Liberation Sans', sans-serif;">0013</div>
<div class="t" style="left:107.60px;top:277.40px;font-size:13px;color:#000;font-weight:normal;font-family:'Liberation Sans', sans-serif;">Bia lon ĐV Lager</div>
<div class="t" style="right:569.00px;top:277.65px;font-size:12.7px;color:#000;font-weight:normal;font-family:'Liberation Sans', sans-serif;">1.343.148.000</div>
<div class="t" style="right:466.50px;top:277.65px;font-size:12.7px;color:#000;font-weight:normal;font-family:'Liberation Sans', sans-serif;">1.243.856.100</div>
<div class="t" style="right:364.50px;top:277.65px;font-size:12.7px;color:#000;font-weight:normal;font-family:'Liberation Sans', sans-serif;">1.389.211.300</div>
<svg class="r" style="left:24px;top:273px" width="7" height="7" viewBox="0 0 7 7"><path d="M0 0 H6.5 L0 6.5 Z" fill="#008000"/></svg>
<div class="t" style="left:26.00px;top:297.65px;font-size:12.7px;color:#000;font-weight:normal;font-family:'Liberation Sans', sans-serif;">0014</div>
<div class="t" style="left:107.60px;top:297.40px;font-size:13px;color:#000;font-weight:normal;font-family:'Liberation Sans', sans-serif;">Bia lon ĐV vàng</div>
<div class="t" style="right:569.00px;top:297.65px;font-size:12.7px;color:#000;font-weight:normal;font-family:'Liberation Sans', sans-serif;">982.360.300</div>
<div class="t" style="right:466.50px;top:297.65px;font-size:12.7px;color:#000;font-weight:normal;font-family:'Liberation Sans', sans-serif;">956.417.800</div>
<div class="t" style="right:364.50px;top:297.65px;font-size:12.7px;color:#000;font-weight:normal;font-family:'Liberation Sans', sans-serif;">1.030.458.200</div>
<svg class="r" style="left:24px;top:293px" width="7" height="7" viewBox="0 0 7 7"><path d="M0 0 H6.5 L0 6.5 Z" fill="#008000"/></svg>
<div class="t" style="left:26.00px;top:317.65px;font-size:12.7px;color:#000;font-weight:normal;font-family:'Liberation Sans', sans-serif;">1001</div>
<div class="t" style="left:107.60px;top:317.40px;font-size:13px;color:#000;font-weight:normal;font-family:'Liberation Sans', sans-serif;">Pushmax Bí đao</div>
<div class="t" style="right:569.00px;top:317.65px;font-size:12.7px;color:#000;font-weight:normal;font-family:'Liberation Sans', sans-serif;">1.123.846.200</div>
<div class="t" style="right:466.50px;top:317.65px;font-size:12.7px;color:#000;font-weight:normal;font-family:'Liberation Sans', sans-serif;">1.023.546.000</div>
<div class="t" style="right:364.50px;top:317.65px;font-size:12.7px;color:#000;font-weight:normal;font-family:'Liberation Sans', sans-serif;">1.212.436.400</div>
<svg class="r" style="left:24px;top:313px" width="7" height="7" viewBox="0 0 7 7"><path d="M0 0 H6.5 L0 6.5 Z" fill="#008000"/></svg>
<div class="t" style="left:26.00px;top:337.65px;font-size:12.7px;color:#000;font-weight:normal;font-family:'Liberation Sans', sans-serif;">1002</div>
<div class="t" style="left:107.60px;top:337.40px;font-size:13px;color:#000;font-weight:normal;font-family:'Liberation Sans', sans-serif;">Pushmax Chanh leo</div>
<div class="t" style="right:569.00px;top:337.65px;font-size:12.7px;color:#000;font-weight:normal;font-family:'Liberation Sans', sans-serif;">984.350.000</div>
<div class="t" style="right:466.50px;top:337.65px;font-size:12.7px;color:#000;font-weight:normal;font-family:'Liberation Sans', sans-serif;">980.136.200</div>
<div class="t" style="right:364.50px;top:337.65px;font-size:12.7px;color:#000;font-weight:normal;font-family:'Liberation Sans', sans-serif;">852.322.400</div>
<svg class="r" style="left:24px;top:333px" width="7" height="7" viewBox="0 0 7 7"><path d="M0 0 H6.5 L0 6.5 Z" fill="#008000"/></svg>
<div class="t" style="left:26.00px;top:357.65px;font-size:12.7px;color:#000;font-weight:normal;font-family:'Liberation Sans', sans-serif;">9003</div>
<div class="t" style="left:107.60px;top:357.40px;font-size:13px;color:#000;font-weight:normal;font-family:'Liberation Sans', sans-serif;">Nước tinh khiết</div>
<div class="t" style="right:569.00px;top:357.65px;font-size:12.7px;color:#000;font-weight:normal;font-family:'Liberation Sans', sans-serif;">886.135.000</div>
<div class="t" style="right:466.50px;top:357.65px;font-size:12.7px;color:#000;font-weight:normal;font-family:'Liberation Sans', sans-serif;">754.132.600</div>
<div class="t" style="right:364.50px;top:357.65px;font-size:12.7px;color:#000;font-weight:normal;font-family:'Liberation Sans', sans-serif;">988.423.300</div>
<svg class="r" style="left:24px;top:353px" width="7" height="7" viewBox="0 0 7 7"><path d="M0 0 H6.5 L0 6.5 Z" fill="#008000"/></svg>
<div class="t" style="left:26.00px;top:377.65px;font-size:12.7px;color:#000;font-weight:normal;font-family:'Liberation Sans', sans-serif;">9004</div>
<div class="t" style="left:107.60px;top:377.40px;font-size:13px;color:#000;font-weight:normal;font-family:'Liberation Sans', sans-serif;">Nước khoáng</div>
<div class="t" style="right:569.00px;top:377.65px;font-size:12.7px;color:#000;font-weight:normal;font-family:'Liberation Sans', sans-serif;">268.973.200</div>
<div class="t" style="right:466.50px;top:377.65px;font-size:12.7px;color:#000;font-weight:normal;font-family:'Liberation Sans', sans-serif;">465.000.200</div>
<div class="t" style="right:364.50px;top:377.65px;font-size:12.7px;color:#000;font-weight:normal;font-family:'Liberation Sans', sans-serif;">498.760.000</div>
<svg class="r" style="left:24px;top:373px" width="7" height="7" viewBox="0 0 7 7"><path d="M0 0 H6.5 L0 6.5 Z" fill="#008000"/></svg>
<div class="r" style="left:22px;top:212px;width:2px;height:181px;background:#217346"></div>
<div class="r" style="left:261px;top:191px;width:128px;height:2px;background:#217346"></div>
<div class="r" style="left:260px;top:211px;width:130px;height:2px;background:#217346"></div>
<div class="r" style="left:260px;top:211px;width:2px;height:183px;background:#217346"></div>
<div class="r" style="left:388px;top:211px;width:2px;height:179px;background:#217346"></div>
<div class="r" style="left:260px;top:391px;width:126px;height:2px;background:#217346"></div>
<div class="r" style="left:386px;top:389px;width:6px;height:6px;background:#217346;border:1px solid #fff;box-sizing:content-box;margin:-1px"></div>
<div class="r" style="left:607px;top:213px;width:302px;height:232px;background:#f0f0f0;border:1px solid #6f6f6f;box-sizing:border-box;box-shadow:0 2px 14px rgba(0,0,0,0.28)"></div>
<div class="r" style="left:608px;top:214px;width:300px;height:30px;background:#ffffff"></div>
<div class="t" style="left:616.40px;top:222.67px;font-size:12.2px;color:#000;font-weight:normal;transform:scaleX(0.9695);transform-origin:0 0;">New Name</div>
<svg class="r" style="left:876px;top:219px" width="18" height="18" viewBox="876 219 18 18"><path d="M880 223 L890.3 233.3 M890.3 223 L880 233.3" stroke="#111" stroke-width="1"/></svg>
<div class="t" style="left:840.30px;transform:translateX(-50%);top:222.42px;font-size:12.5px;color:#111;font-weight:normal;font-family:'Liberation Sans', sans-serif;">?</div>
<div class="t" style="left:614.30px;top:251.84px;font-size:12px;color:#000;font-weight:normal;transform:scaleX(0.8772);transform-origin:0 0;"><u>N</u>ame:</div>
<div class="r" style="left:675px;top:251px;width:227px;height:20px;background:#fff;border:1px solid #a9a9a9;box-sizing:border-box"></div>
<div class="t" style="left:679.00px;top:256.39px;font-size:11.35px;color:#000;font-weight:normal;font-family:'Liberation Sans', sans-serif;">Doanh_thu_2017<span style="position:absolute;top:-1px;margin-left:0.5px;width:1px;height:13px;background:#000"></span></div>
<div class="t" style="left:614.30px;top:274.84px;font-size:12px;color:#000;font-weight:normal;transform:scaleX(0.8754);transform-origin:0 0;"><u>S</u>cope:</div>
<div class="r" style="left:675px;top:274px;width:152px;height:22px;background:#fff;border:1px solid #a9a9a9;box-sizing:border-box"></div>
<div class="r" style="left:809px;top:275px;width:17px;height:20px;background:#e1e1e1;border:1px solid #adadad;box-sizing:border-box;margin-left:0"></div>
<svg class="r" style="left:810px;top:279px" width="14" height="10" viewBox="810 279 14 10"><path d="M813 282.6 L817 286.4 L821 282.6" fill="none" stroke="#333" stroke-width="1.3"/></svg>
<div class="t" style="left:679.00px;top:278.76px;font-size:12.1px;color:#000;font-weight:normal;font-family:'Liberation Sans', sans-serif;">Workbook</div>
<div class="t" style="left:614.30px;top:299.34px;font-size:12px;color:#000;font-weight:normal;transform:scaleX(0.9197);transform-origin:0 0;">C<u>o</u>mment:</div>
<div class="r" style="left:675px;top:299px;width:227px;height:89px;background:#fff;border:1px solid #a9a9a9;box-sizing:border-box"></div>
<div class="r" style="left:884px;top:302px;width:16px;height:83px;background:#f0f0f0"></div>
<svg class="r" style="left:884px;top:302px" width="16" height="84" viewBox="884 302 16 84"><path d="M887.8 313.6 L891.4 309.6 L895 313.6 M887.8 374.4 L891.4 378.4 L895 374.4" fill="none" stroke="#b4b4b4" stroke-width="1.7"/></svg>
<div class="t" style="left:614.10px;top:391.84px;font-size:12px;color:#000;font-weight:normal;transform:scaleX(0.9400);transform-origin:0 0;"><u>R</u>efers to:</div>
<div class="r" style="left:675px;top:391px;width:227px;height:20px;background:#fff;border:1px solid #a9a9a9;box-sizing:border-box"></div>
<div class="r" style="left:880px;top:392px;width:21px;height:18px;background:#fff;border:1px solid #adadad;box-sizing:border-box;box-shadow:inset 0 0 0 2px #e3e3e3"></div>
<svg class="r" style="left:880px;top:392px" width="21" height="18" viewBox="880 392 21 18"><path d="M885.8 401.2 L890 396.3 L894.2 401.2 Z" fill="#000"/><rect x="889.2" y="400" width="1.7" height="3.6" fill="#000"/><rect x="885.8" y="404.6" width="8.4" height="1.3" fill="#000"/></svg>
<div class="t" style="left:679.80px;top:395.84px;font-size:12px;color:#000;font-weight:normal;transform:scaleX(0.9565);transform-origin:0 0;">='Doanh thu'!$C$2:$C$10</div>
<div class="r" style="left:743px;top:414px;width:74px;height:22px;background:#e1e1e1;border:2px solid #0078d7;box-sizing:border-box"></div>
<div class="t" style="left:772.40px;top:418.84px;font-size:12px;color:#000;font-weight:normal;transform:scaleX(0.8362);transform-origin:0 0;">OK</div>
<div class="r" style="left:827px;top:414px;width:74px;height:22px;background:#e1e1e1;border:1px solid #adadad;box-sizing:border-box"></div>
<div class="t" style="left:847.60px;top:418.84px;font-size:12px;color:#000;font-weight:normal;transform:scaleX(0.8834);transform-origin:0 0;">Cancel</div>
<svg class="r" style="left:896px;top:432px" width="12" height="12" viewBox="896 432 12 12"><path d="M908 433 V444 H897 Z" fill="#9c9c9c"/><path d="M907.5 436 L900 443.5 M907.5 439.5 L903.5 443.5" stroke="#f4f4f4" stroke-width="1.1"/></svg>
</body></html>
